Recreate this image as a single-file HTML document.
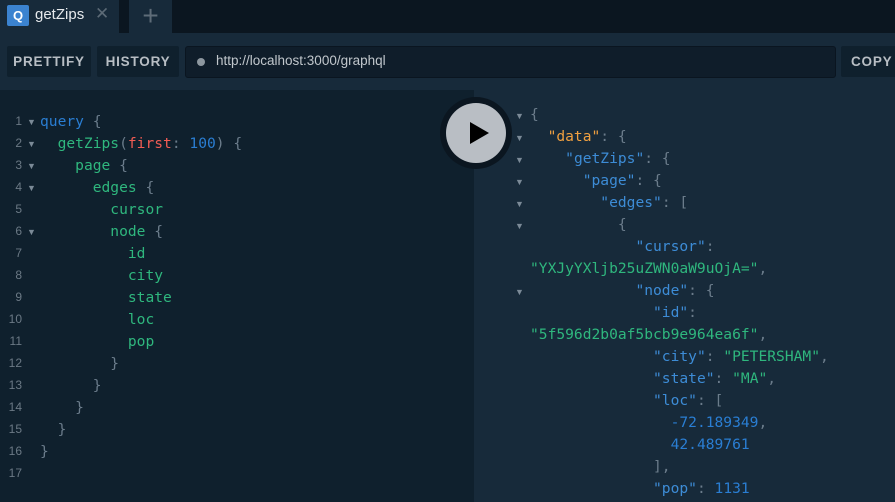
<!DOCTYPE html><html><head><style>
body{margin:0;width:895px;height:502px;overflow:hidden;background:#172a3a;font-family:"Liberation Sans",sans-serif;position:relative}
.a{position:absolute}
.m{font-family:"DejaVu Sans Mono",monospace;font-size:14.6px;white-space:pre;line-height:22px}
.btn{position:absolute;top:46px;height:31px;background:#0f202d;border-radius:2px;color:#b8bec4;font-size:13.5px;font-weight:bold;letter-spacing:.8px;line-height:31px;text-align:center}
.k{color:#2a7ed3}.f{color:#2fb77e}.p{color:#6b7c8b}.r{color:#f25c54}.n{color:#2a7ed3}
.ky{color:#3d8cd6}.s{color:#2fb77e}.o{color:#f0a040}
.ln{color:#6b7985;font-size:12px}
.ar{color:#7b8a97;font-size:9px}
</style></head><body>
<div class="a" style="left:0;top:0;width:895px;height:33px;background:#0b1620"></div>
<div class="a" style="left:0;top:0;width:119px;height:36px;background:#172a3a"></div>
<div class="a" style="left:7px;top:5px;width:22px;height:21px;background:#3b83d0;border-radius:2px;color:#fff;font-weight:bold;font-size:13px;text-align:center;line-height:21px">Q</div>
<div class="a" style="left:35px;top:6px;color:#e6e9ec;font-size:15px">getZips</div>
<div class="a" style="left:95px;top:4px;color:#5c6a76;font-size:17px">✕</div>
<div class="a" style="left:129px;top:0;width:43px;height:36px;background:#172a3a;color:#5e6c78;font-size:28px;text-align:center;line-height:32px">+</div>
<div class="btn" style="left:7px;width:84px">PRETTIFY</div>
<div class="btn" style="left:97px;width:82px">HISTORY</div>
<div class="a" style="left:185px;top:46px;width:649px;height:30px;background:#0f1d2a;border:1px solid #0a1520;border-radius:3px"></div>
<div class="a" style="left:197px;top:58px;width:8px;height:8px;border-radius:50%;background:#8d979f"></div>
<div class="a" style="left:216px;top:53px;color:#c1c7cc;font-size:13.5px">http://localhost:3000/graphql</div>
<div class="btn" style="left:841px;width:70px;text-align:left;padding-left:10px">COPY</div>
<div class="a" style="left:0;top:90px;width:474px;height:412px;background:#0f202d"></div>
<div class="a ln" style="left:0;top:110px;width:22px;text-align:right;line-height:22px;white-space:pre">1
2
3
4
5
6
7
8
9
10
11
12
13
14
15
16
17</div>
<div class="a ar" style="left:27px;top:111px;line-height:22px;white-space:pre">▼
▼
▼
▼

▼</div>
<div class="a m" style="left:40px;top:111px"><span class="k">query</span> <span class="p">{</span>
  <span class="f">getZips</span><span class="p">(</span><span class="r">first</span><span class="p">:</span> <span class="n">100</span><span class="p">) {</span>
    <span class="f">page</span> <span class="p">{</span>
      <span class="f">edges</span> <span class="p">{</span>
        <span class="f">cursor</span>
        <span class="f">node</span> <span class="p">{</span>
          <span class="f">id</span>
          <span class="f">city</span>
          <span class="f">state</span>
          <span class="f">loc</span>
          <span class="f">pop</span>
        <span class="p">}</span>
      <span class="p">}</span>
    <span class="p">}</span>
  <span class="p">}</span>
<span class="p">}</span>
</div>
<div class="a" style="left:440px;top:97px;width:72px;height:72px;border-radius:50%;background:#0b1620"></div>
<div class="a" style="left:446px;top:103px;width:60px;height:60px;border-radius:50%;background:#b9bec4"></div>
<div class="a" style="left:470px;top:122px;width:0;height:0;border-left:19px solid #000;border-top:11px solid transparent;border-bottom:11px solid transparent"></div>
<div class="a ar" style="left:515px;top:105px;line-height:22px;white-space:pre">▼
▼
▼
▼
▼
▼


▼</div>
<div class="a m" style="left:530px;top:104px"><span class="p">{</span>
  <span class="o">"data"</span><span class="p">: {</span>
    <span class="ky">"getZips"</span><span class="p">: {</span>
      <span class="ky">"page"</span><span class="p">: {</span>
        <span class="ky">"edges"</span><span class="p">: [</span>
          <span class="p">{</span>
            <span class="ky">"cursor"</span><span class="p">:</span>
<span class="s">"YXJyYXljb25uZWN0aW9uOjA="</span><span class="p">,</span>
            <span class="ky">"node"</span><span class="p">: {</span>
              <span class="ky">"id"</span><span class="p">:</span>
<span class="s">"5f596d2b0af5bcb9e964ea6f"</span><span class="p">,</span>
              <span class="ky">"city"</span><span class="p">:</span> <span class="s">"PETERSHAM"</span><span class="p">,</span>
              <span class="ky">"state"</span><span class="p">:</span> <span class="s">"MA"</span><span class="p">,</span>
              <span class="ky">"loc"</span><span class="p">: [</span>
                <span class="n">-72.189349</span><span class="p">,</span>
                <span class="n">42.489761</span>
              <span class="p">],</span>
              <span class="ky">"pop"</span><span class="p">:</span> <span class="n">1131</span>
</div>
</body></html>
